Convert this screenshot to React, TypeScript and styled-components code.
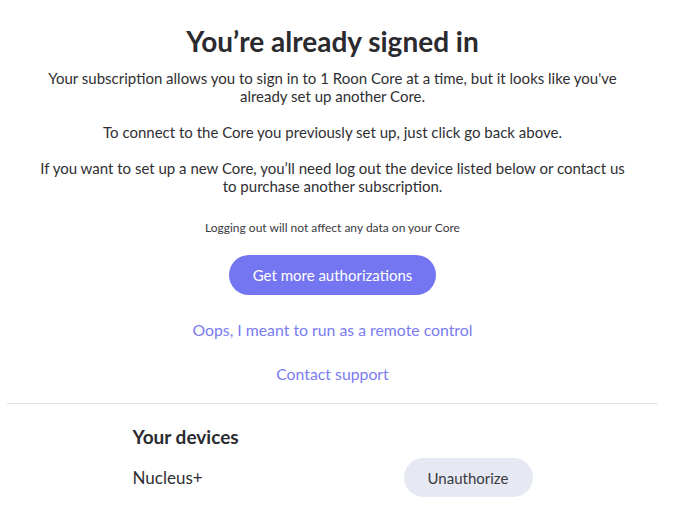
import React from "react";
import styled, { createGlobalStyle } from "styled-components";

const Global = createGlobalStyle`
  html, body { margin: 0; padding: 0; background: #ffffff; }
  body { font-family: Lato, "Noto Sans", sans-serif; color: #2b2b30; }
`;

const Page = styled.div`
  margin: 0 15px 0 7px;
  padding-top: 24px;
  display: flex;
  flex-direction: column;
  align-items: center;
`;

const Title = styled.h1`
  margin: 0;
  font-size: 28px;
  line-height: 34px;
  font-weight: 700;
  color: #2a2a2f;
`;

const Intro = styled.div`
  margin-top: 11px;
  display: flex;
  flex-direction: column;
  align-items: center;
`;

const Para = styled.p`
  margin: 0 0 18px;
  max-width: 600px;
  text-align: center;
  font-size: 15px;
  line-height: 18px;
  color: #2f2f33;
`;

const Note = styled.p`
  margin: 7px 0 0;
  font-size: 12px;
  line-height: 15px;
  color: #3a3a3e;
`;

const PrimaryButton = styled.button`
  margin-top: 20px;
  height: 40px;
  padding: 0 24px;
  border: none;
  border-radius: 20px;
  background: #7475f0;
  color: #ffffff;
  font-family: Lato, "Noto Sans", sans-serif;
  font-size: 15px;
  cursor: pointer;
`;

const LinkButton = styled.a<{ $top: number }>`
  margin-top: ${(p) => p.$top}px;
  font-size: 15.8px;
  line-height: 20px;
  color: #7a7cf0;
  text-decoration: none;
  cursor: pointer;
`;

const Divider = styled.hr`
  align-self: stretch;
  margin: 19px 0 0;
  border: none;
  border-top: 1px solid #e2e2e4;
`;

const Devices = styled.section`
  width: 400px;
  margin-top: 21px;
  display: flex;
  flex-direction: column;
`;

const DevicesTitle = styled.h2`
  margin: 0;
  font-size: 19px;
  line-height: 24px;
  font-weight: 700;
  color: #2a2a2f;
`;

const DeviceRow = styled.div`
  margin-top: 9px;
  display: flex;
  align-items: center;
  justify-content: space-between;
`;

const DeviceName = styled.span`
  font-size: 17px;
  color: #2f2f33;
`;

const SecondaryButton = styled.button`
  height: 39px;
  width: 129px;
  border: none;
  border-radius: 20px;
  background: #e6e9f3;
  color: #3a3a3e;
  font-family: Lato, "Noto Sans", sans-serif;
  font-size: 15px;
  cursor: pointer;
`;

export default function App() {
  return (
    <>
      <Global />
      <Page>
        <Title>You’re already signed in</Title>
        <Intro>
          <Para>
            Your subscription allows you to sign in to 1 Roon Core at a time, but it looks like you've
            already set up another Core.
          </Para>
          <Para>To connect to the Core you previously set up, just click go back above.</Para>
          <Para>
            If you want to set up a new Core, you’ll need log out the device listed below or contact us
            to purchase another subscription.
          </Para>
        </Intro>
        <Note>Logging out will not affect any data on your Core</Note>
        <PrimaryButton>Get more authorizations</PrimaryButton>
        <LinkButton $top={25}>Oops, I meant to run as a remote control</LinkButton>
        <LinkButton $top={24}>Contact support</LinkButton>
        <Divider />
        <Devices>
          <DevicesTitle>Your devices</DevicesTitle>
          <DeviceRow>
            <DeviceName>Nucleus+</DeviceName>
            <SecondaryButton>Unauthorize</SecondaryButton>
          </DeviceRow>
        </Devices>
      </Page>
    </>
  );
}
